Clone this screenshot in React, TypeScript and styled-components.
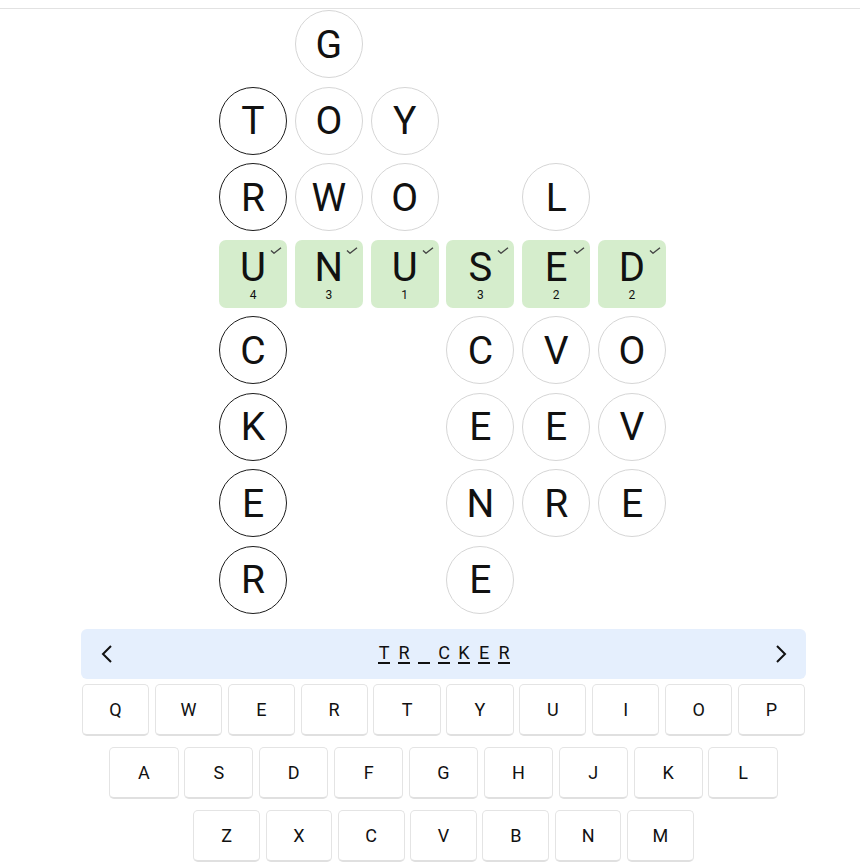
import React from 'react'
import styled, { createGlobalStyle } from 'styled-components'

const board = ['.G....', 'TOY...', 'RWO.L.', 'UNUSED', 'C..CVO', 'K..EEV', 'E..NRE', 'R..E..']
const solvedRow = 3
const counts = [4, 3, 1, 3, 2, 2]
const hint = ['T', 'R', '', 'C', 'K', 'E', 'R']

const keyRows = [
  { keys: 'QWERTYUIOP', width: 67.3 },
  { keys: 'ASDFGHJKL', width: 69.3 },
  { keys: 'ZXCVBNM', width: 66.7 },
]

const GlobalStyle = createGlobalStyle`
  body {
    margin: 0;
    background: #ffffff;
    font-family: Roboto, 'Noto Sans', 'Liberation Sans', sans-serif;
    color: #111111;
  }
`

const App = () => {
  return (
    <>
      <GlobalStyle />
      <TopBar />
      <Main>
        <Board>
          {board.map((row, r) =>
            row.split('').map((ch, c) => {
              const key = `${r}-${c}`
              if (ch === '.') return <Empty key={key} />
              if (r === solvedRow) {
                return (
                  <Solved key={key}>
                    <Check viewBox="0 0 12 7" aria-hidden="true">
                      <polyline points="1,3.5 4,6.2 11,0.8" />
                    </Check>
                    <SolvedLetter>{ch}</SolvedLetter>
                    <Count>{counts[c]}</Count>
                  </Solved>
                )
              }
              return (
                <Circle key={key} $dark={c === 0}>
                  {ch}
                </Circle>
              )
            })
          )}
        </Board>

        <HintBar>
          <Arrow viewBox="0 0 12 20" aria-hidden="true">
            <polyline points="10,2 2,10 10,18" />
          </Arrow>
          <HintWord>
            {hint.map((ch, i) => (
              <HintChar key={i}>{ch}</HintChar>
            ))}
          </HintWord>
          <Arrow viewBox="0 0 12 20" aria-hidden="true">
            <polyline points="2,2 10,10 2,18" />
          </Arrow>
        </HintBar>

        <Keyboard>
          {keyRows.map((row) => (
            <KeyRow key={row.keys}>
              {row.keys.split('').map((k) => (
                <Key key={k} $width={row.width}>
                  {k}
                </Key>
              ))}
            </KeyRow>
          ))}
        </Keyboard>
      </Main>
    </>
  )
}

const TopBar = styled.div`
  height: 8px;
  border-bottom: 1px solid #e2e2e2;
`

const Main = styled.main`
  width: 725px;
  margin-left: 81px;
  padding-top: 1px;
`

const Board = styled.div`
  display: grid;
  grid-template-columns: repeat(6, 68px);
  grid-auto-rows: 68px;
  column-gap: 7.8px;
  row-gap: 8.57px;
  justify-content: center;
  padding-right: 2px;
`

const Empty = styled.div``

const Circle = styled.div<{ $dark?: boolean }>`
  box-sizing: border-box;
  border-radius: 50%;
  border: 1px solid ${(p) => (p.$dark ? '#1c1c1c' : '#d6d6d6')};
  display: flex;
  align-items: center;
  justify-content: center;
  font-size: 39px;
  line-height: 1;
  padding-top: 2px;
`

const Solved = styled.div`
  position: relative;
  border-radius: 7px;
  background: #d5edcc;
  display: flex;
  flex-direction: column;
  align-items: center;
  padding-top: 11px;
  box-sizing: border-box;
`

const SolvedLetter = styled.span`
  font-size: 40px;
  line-height: 34px;
`

const Count = styled.span`
  font-size: 12px;
  line-height: 13px;
  margin-top: 4px;
`

const Check = styled.svg`
  position: absolute;
  top: 7px;
  right: 5px;
  width: 12px;
  height: 7px;
  fill: none;
  stroke: #444444;
  stroke-width: 1.4;
`

const HintBar = styled.div`
  margin-top: 15px;
  height: 50px;
  border-radius: 6px;
  background: #e5effd;
  display: flex;
  align-items: center;
  justify-content: space-between;
  padding: 0 19px 0 20px;
`

const Arrow = styled.svg`
  width: 12px;
  height: 20px;
  fill: none;
  stroke: #111111;
  stroke-width: 2;
`

const HintWord = styled.div`
  display: flex;
  gap: 8px;
`

const HintChar = styled.span`
  width: 12px;
  height: 19px;
  border-bottom: 2px solid #111111;
  font-size: 18px;
  line-height: 20px;
  text-align: center;
`

const Keyboard = styled.div`
  margin-top: 5px;
  display: flex;
  flex-direction: column;
  gap: 11px;
`

const KeyRow = styled.div`
  display: flex;
  justify-content: center;
  gap: 5.6px;
`

const Key = styled.button<{ $width: number }>`
  box-sizing: border-box;
  width: ${(p) => p.$width}px;
  height: 52px;
  padding: 0;
  background: #ffffff;
  border: 1px solid #e4e4e4;
  border-bottom: 2px solid #e0e0e0;
  border-radius: 5px;
  font-family: Roboto, 'Noto Sans', 'Liberation Sans', sans-serif;
  font-size: 18px;
  color: #111111;
  display: flex;
  align-items: center;
  justify-content: center;
`

export default App
